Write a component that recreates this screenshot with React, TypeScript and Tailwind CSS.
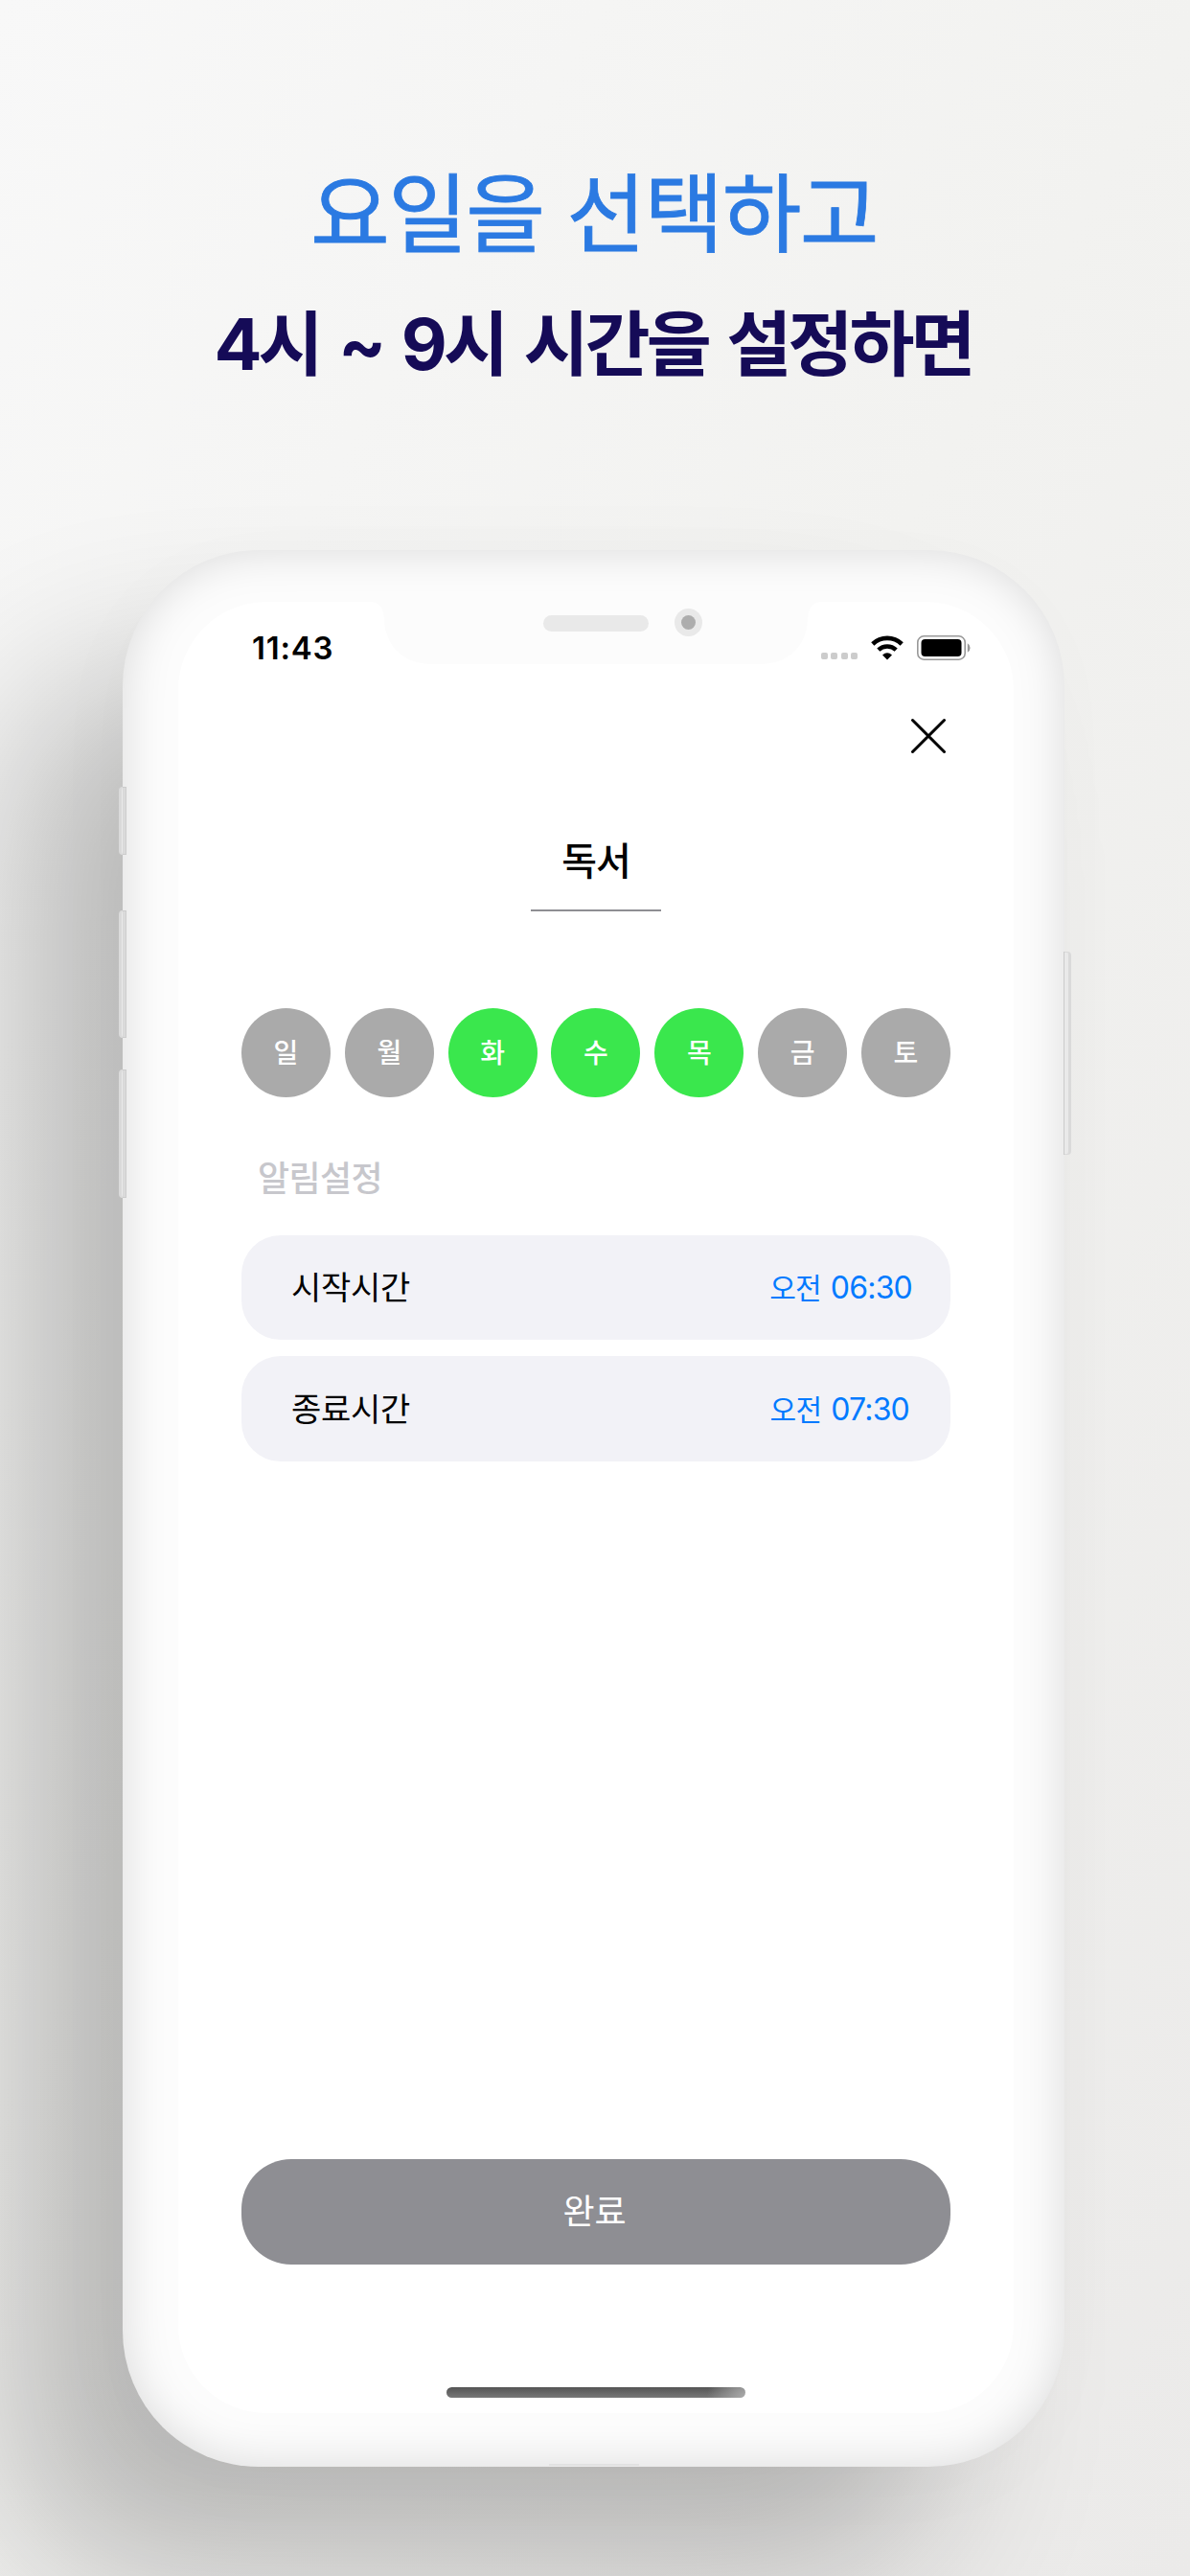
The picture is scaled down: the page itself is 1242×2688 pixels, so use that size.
import React from "react";

const days = [
  { label: "일", on: false },
  { label: "월", on: false },
  { label: "화", on: true },
  { label: "수", on: true },
  { label: "목", on: true },
  { label: "금", on: false },
  { label: "토", on: false },
];

function Notch() {
  return (
    <div className="absolute left-1/2 top-0 h-[65px] w-[470px] -translate-x-1/2">
      <svg className="absolute inset-0" width="470" height="65" viewBox="0 0 470 65" fill="#fcfcfc">
        <path d="M0 0 Q13 1 14 18 C15 48 36 65 64 65 H406 C434 65 455 48 456 18 Q457 1 470 0 Z" />
      </svg>
      <div className="absolute left-[180px] top-[14px] h-[17px] w-[110px] rounded-full bg-[#e9e9e9]" />
      <div className="absolute left-[317px] top-[7px] flex size-[29px] items-center justify-center rounded-full bg-[#e9e9e9]">
        <div className="size-[15px] rounded-full bg-[#adadad]" />
      </div>
    </div>
  );
}

function StatusBar() {
  return (
    <div className="flex h-[97px] items-start justify-between pl-[77px] pr-[44px] pt-[28px]">
      <div className="text-[33px] font-semibold leading-[40px] tracking-[0.8px] text-black">11:43</div>
      <div className="mt-[7px] flex h-[26px] items-start">
        <div className="mt-[18px] flex gap-[3.3px]">
          <i className="size-[7px] rounded-[2px] bg-[#cccccc]" />
          <i className="size-[7px] rounded-[2px] bg-[#cccccc]" />
          <i className="size-[7px] rounded-[2px] bg-[#cccccc]" />
          <i className="size-[7px] rounded-[2px] bg-[#cccccc]" />
        </div>
        <svg className="ml-[14px]" width="34" height="26" viewBox="0 0 34 26" fill="none" stroke="#000">
          <path d="M1.8 9 A22 22 0 0 1 32.2 9" strokeWidth="4.6" />
          <path d="M7.8 15.2 A13.5 13.5 0 0 1 26.2 15.2" strokeWidth="4.5" />
          <path d="M17 25.4 L12 20.4 Q17 16 22 20.4 Z" fill="#000" stroke="none" />
        </svg>
        <svg className="ml-[14px]" width="57" height="26" viewBox="0 0 57 26">
          <rect x="0.8" y="0.8" width="49.4" height="24.4" rx="6.5" fill="none" stroke="#999" strokeWidth="1.6" />
          <rect x="4.5" y="4" width="42" height="18" rx="4" fill="#000" />
          <path d="M52.8 8.3 Q55.6 10 55.6 13 T52.8 17.7 Z" fill="#999" />
        </svg>
      </div>
    </div>
  );
}

function TimeRow({ label, period, time, className }: { label: string; period: string; time: string; className: string }) {
  return (
    <div className={`flex items-center justify-between rounded-[41px] bg-[#f2f2f7] pl-[52px] pt-px ${className}`}>
      <span className="text-[34px] leading-[44px] tracking-[-0.3px] text-black">{label}</span>
      <span className="flex items-baseline gap-[10px] leading-[44px] text-[#007aff]">
        <span className="text-[30px] tracking-[-0.8px]">{period}</span>
        <span className="text-[32px] tracking-[-0.8px]">{time}</span>
      </span>
    </div>
  );
}

function SideButton({ className }: { className: string }) {
  return (
    <div className={`absolute w-[8px] border border-[#dadada] bg-[#e9e9e9] ${className}`} />
  );
}

export default function App() {
  return (
    <div className="flex h-[2688px] w-[1242px] flex-col overflow-hidden bg-linear-[120deg,#f8f8f8_0%,#f2f2f0_45%,#ebeae9_100%] font-['Inter','Noto_Sans_CJK_KR',sans-serif]">
      <header className="flex h-[574px] shrink-0 flex-col items-center pr-[2px] pt-[164px]">
        <h1 className="text-[90px] leading-[120px] tracking-[-1.6px] text-[#2b7ae2] [-webkit-text-stroke:0.8px_#2b7ae2]">요일을 선택하고</h1>
        <h2 className="mt-[15px] pr-[2px] text-[74px] font-bold leading-[120px] tracking-[-4px] text-[#150b57] [word-spacing:6px]">
          4시 ~ 9시 시간을 설정하면
        </h2>
      </header>

      <div className="relative ml-[128px] flex h-[2000px] w-[983px] shrink-0 flex-col rounded-[142px] bg-[#fcfcfc] pl-[58px] pt-[54px] shadow-[-126px_122px_180px_-12px_rgba(0,0,0,0.24),-10px_20px_100px_0px_rgba(0,0,0,0.02)]">
        <SideButton className="-left-[4px] top-[247px] h-[71px] rounded-l-[4px] border-l-[3px]" />
        <SideButton className="-left-[4px] top-[376px] h-[133px] rounded-l-[4px] border-l-[3px]" />
        <SideButton className="-left-[4px] top-[542px] h-[134px] rounded-l-[4px] border-l-[3px]" />
        <SideButton className="-right-[7px] top-[419px] h-[212px] rounded-r-[4px] border-r-[3px]" />
        <div className="pointer-events-none absolute inset-0 rounded-[142px] shadow-[inset_0_0_46px_2px_rgba(0,0,0,0.13)]" />
        <div className="absolute bottom-px left-[445px] h-[2px] w-[94px] bg-[#e2e2e2]" />

        <main className="relative flex h-[1890px] w-[872px] flex-col rounded-[92px] bg-white">
          <Notch />
          <StatusBar />
          <button className="ml-[762px] mt-[22px] flex size-[42px] items-center justify-center" aria-label="닫기">
            <svg width="38" height="38" viewBox="0 0 38 38" stroke="#000" strokeWidth="3" strokeLinecap="round">
              <path d="M2.5 2.5 L35.5 35.5 M35.5 2.5 L2.5 35.5" />
            </svg>
          </button>

          <div className="mt-[78px] flex w-[136px] flex-col items-center self-center border-b-2 border-[#8e8e93] pb-[18px]">
            <span className="text-[40px] font-medium leading-[64px] tracking-[-1px] text-black">독서</span>
          </div>

          <section className="flex grow flex-col px-[66px] pt-[101px]">
            <div className="flex justify-between">
              {days.map((d) => (
                <div
                  key={d.label}
                  className={`flex size-[93px] items-center justify-center rounded-full text-[28px] font-medium leading-[40px] text-white ${d.on ? "bg-[#3ae74d]" : "bg-[#aaaaaa]"}`}
                >
                  {d.label}
                </div>
              ))}
            </div>
            <h3 className="ml-[17px] mt-[61px] text-[36px] font-medium leading-[48px] tracking-[-0.6px] text-[#c7c7cc]">알림설정</h3>
            <TimeRow label="시작시간" period="오전" time="06:30" className="mt-[35px] h-[109px] pr-[40px]" />
            <TimeRow label="종료시간" period="오전" time="07:30" className="mt-[17px] h-[110px] pr-[43px]" />
            <button className="mt-[728px] flex h-[110px] items-center justify-center rounded-[52px] bg-[#8e8e93] pr-[3px] text-[36px] leading-[44px] text-white">
              완료
            </button>
            <div className="mt-[128px] h-[11px] w-[312px] self-center rounded-full bg-[radial-gradient(circle_at_100%_100%,#aaa_0px,#aaaaaa00_40px),linear-gradient(#545454,#787878)]" />
          </section>
        </main>
      </div>
    </div>
  );
}
